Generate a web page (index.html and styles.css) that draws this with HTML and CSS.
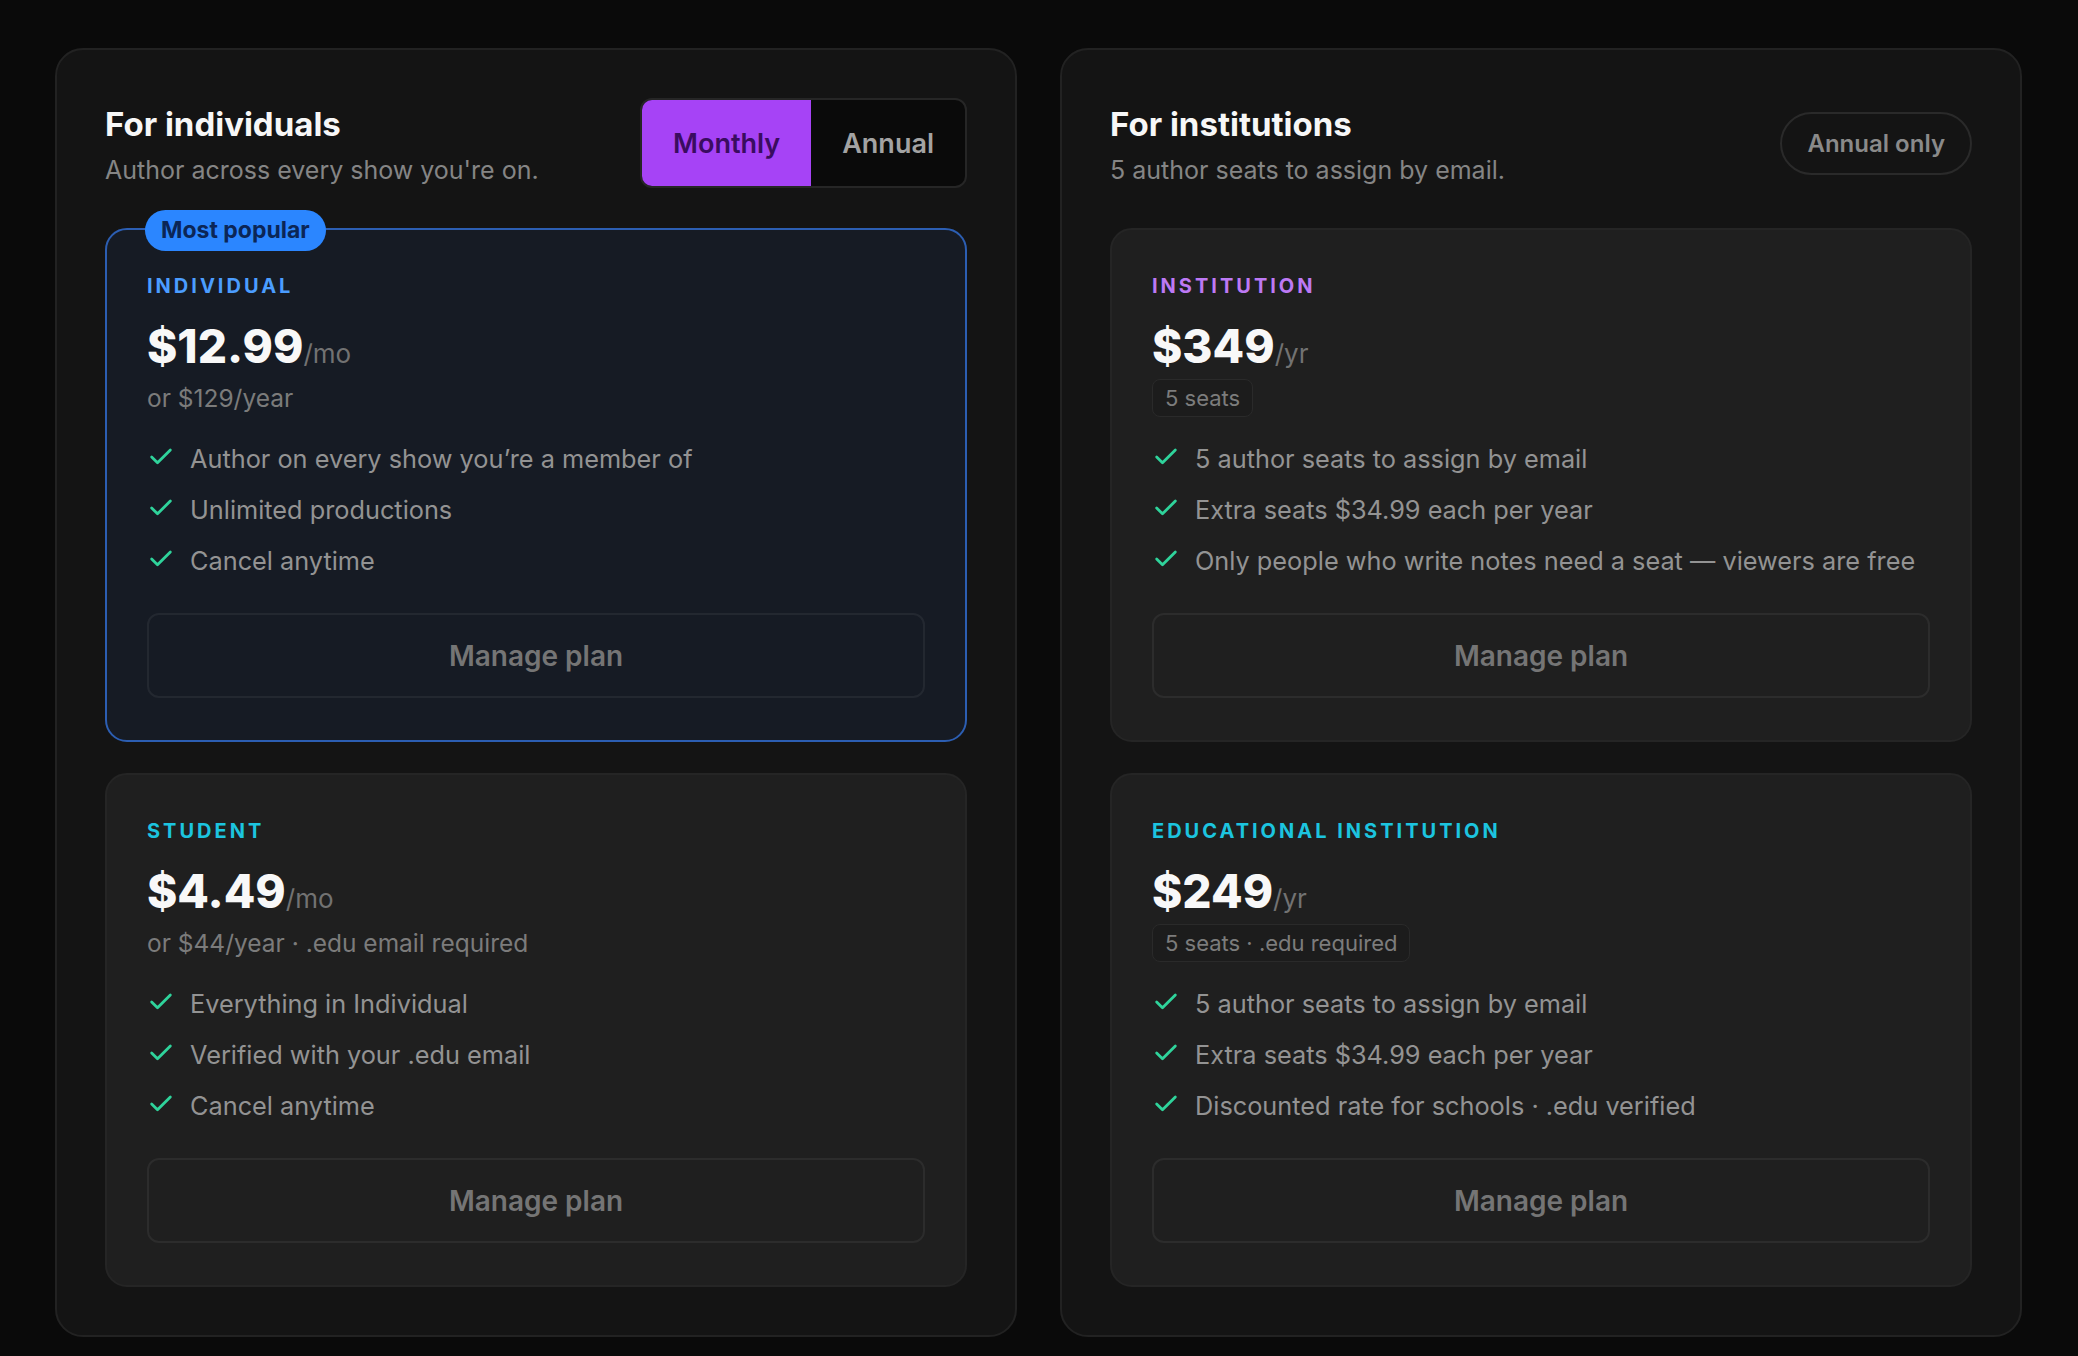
FILE: index.html
```html
<!DOCTYPE html>
<html lang="en">
<head>
    <meta charset="UTF-8">
    <meta name="viewport" content="width=device-width, initial-scale=1.0">
    <title>Plans</title>
    <link rel="stylesheet" href="styles.css">
</head>
<body>
<div class="bang-gia">

    <!-- Cá nhân -->
    <section class="khung-lon">
        <div class="dau-khung">
            <div class="tieu-de">
                <h1>For individuals</h1>
                <p class="mo-ta">Author across every show you're on.</p>
            </div>
            <div class="chon-ky">
                <button class="ky dang-chon">Monthly</button>
                <button class="ky">Annual</button>
            </div>
        </div>

        <div class="the noi-bat">
            <span class="nhan-pho-bien">Most popular</span>
            <div class="ten-goi xanh">INDIVIDUAL</div>
            <div class="gia">$12.99<span class="don-vi">/mo</span></div>
            <div class="ghi-chu">or $129/year</div>
            <ul class="tinh-nang">
                <li><svg viewBox="0 0 24 24"><path d="M20 6 9 17 4 12"/></svg>Author on every show you’re a member of</li>
                <li><svg viewBox="0 0 24 24"><path d="M20 6 9 17 4 12"/></svg>Unlimited productions</li>
                <li><svg viewBox="0 0 24 24"><path d="M20 6 9 17 4 12"/></svg>Cancel anytime</li>
            </ul>
            <button class="nut-quan-ly">Manage plan</button>
        </div>

        <div class="the">
            <div class="ten-goi lam">STUDENT</div>
            <div class="gia">$4.49<span class="don-vi">/mo</span></div>
            <div class="ghi-chu">or $44/year · .edu email required</div>
            <ul class="tinh-nang">
                <li><svg viewBox="0 0 24 24"><path d="M20 6 9 17 4 12"/></svg>Everything in Individual</li>
                <li><svg viewBox="0 0 24 24"><path d="M20 6 9 17 4 12"/></svg>Verified with your .edu email</li>
                <li><svg viewBox="0 0 24 24"><path d="M20 6 9 17 4 12"/></svg>Cancel anytime</li>
            </ul>
            <button class="nut-quan-ly">Manage plan</button>
        </div>
    </section>

    <!-- Tổ chức -->
    <section class="khung-lon">
        <div class="dau-khung">
            <div class="tieu-de">
                <h1>For institutions</h1>
                <p class="mo-ta">5 author seats to assign by email.</p>
            </div>
            <span class="chi-nam">Annual only</span>
        </div>

        <div class="the">
            <div class="ten-goi tim">INSTITUTION</div>
            <div class="gia">$349<span class="don-vi">/yr</span></div>
            <div class="ghi-chu"><span class="the-nho">5 seats</span></div>
            <ul class="tinh-nang">
                <li><svg viewBox="0 0 24 24"><path d="M20 6 9 17 4 12"/></svg>5 author seats to assign by email</li>
                <li><svg viewBox="0 0 24 24"><path d="M20 6 9 17 4 12"/></svg>Extra seats $34.99 each per year</li>
                <li><svg viewBox="0 0 24 24"><path d="M20 6 9 17 4 12"/></svg>Only people who write notes need a seat — viewers are free</li>
            </ul>
            <button class="nut-quan-ly">Manage plan</button>
        </div>

        <div class="the">
            <div class="ten-goi lam">EDUCATIONAL INSTITUTION</div>
            <div class="gia">$249<span class="don-vi">/yr</span></div>
            <div class="ghi-chu"><span class="the-nho">5 seats · .edu required</span></div>
            <ul class="tinh-nang">
                <li><svg viewBox="0 0 24 24"><path d="M20 6 9 17 4 12"/></svg>5 author seats to assign by email</li>
                <li><svg viewBox="0 0 24 24"><path d="M20 6 9 17 4 12"/></svg>Extra seats $34.99 each per year</li>
                <li><svg viewBox="0 0 24 24"><path d="M20 6 9 17 4 12"/></svg>Discounted rate for schools · .edu verified</li>
            </ul>
            <button class="nut-quan-ly">Manage plan</button>
        </div>
    </section>

</div>
</body>
</html>
```

FILE: styles.css
```css
body {
    margin: 0;
    background-color: #0a0a0a;
    font-family: Inter, "Noto Sans", sans-serif;
    color: #f5f5f5;
}

.bang-gia {
    display: grid;
    grid-template-columns: 1fr 1fr;
    gap: 43px;
    padding: 48px 56px 20px 55px;
}

.khung-lon {
    background-color: #141414;
    border: 2px solid #222222;
    border-radius: 28px;
    padding: 48px;
    display: flex;
    flex-direction: column;
    gap: 31px;
}

.dau-khung {
    display: flex;
    justify-content: space-between;
    align-items: flex-start;
    min-height: 90px;
    margin-bottom: 9px;
}

.tieu-de {
    padding-top: 6px;
}

h1 {
    margin: 0;
    font-size: 33px;
    line-height: 40px;
    font-weight: 700;
    color: #f7f7f7;
}

.mo-ta {
    margin: 10px 0 0;
    font-size: 25px;
    line-height: 32px;
    color: #858585;
}

.chon-ky {
    display: flex;
    border: 2px solid #262626;
    border-radius: 12px;
    overflow: hidden;
    background-color: #0a0a0a;
    height: 90px;
    box-sizing: border-box;
}

.ky {
    border: none;
    background: none;
    font-family: inherit;
    font-size: 27px;
    font-weight: 600;
    color: #a3a3a3;
    padding: 0 31px;
    cursor: pointer;
}

.ky.dang-chon {
    background-color: #a643f6;
    color: #3a0c60;
}

.chi-nam {
    align-self: center;
    border: 2px solid #2a2a2a;
    border-radius: 999px;
    padding: 0 25px;
    line-height: 59px;
    font-size: 24px;
    font-weight: 600;
    color: #8a8a8a;
}

.the {
    position: relative;
    background-color: #1f1f1f;
    border: 2px solid #252525;
    border-radius: 22px;
    padding: 42px 40px 42px;
}

.the.noi-bat {
    background-color: #161b24;
    border-color: #2c5eb2;
}

.nhan-pho-bien {
    position: absolute;
    top: -20px;
    left: 38px;
    background-color: #2b86ff;
    color: #0b2657;
    font-size: 23px;
    font-weight: 700;
    line-height: 41px;
    padding: 0 16px;
    border-radius: 999px;
}

.ten-goi {
    font-size: 20px;
    line-height: 28px;
    font-weight: 700;
    letter-spacing: 3px;
}

.xanh { color: #4b9dff; }
.lam { color: #1cc4df; }
.tim { color: #bd79f4; }

.gia {
    margin-top: 20px;
    font-size: 46px;
    line-height: 52px;
    font-weight: 800;
    color: #f8f8f8;
}

.don-vi {
    font-size: 26px;
    line-height: 1;
    font-weight: 400;
    color: #727272;
}

.ghi-chu {
    margin-top: 7px;
    font-size: 24.5px;
    line-height: 38px;
    height: 38px;
    color: #7b7b7b;
}

.the-nho {
    display: inline-block;
    border: 1px solid #2a2a2a;
    background-color: #1c1c1c;
    border-radius: 8px;
    padding: 3px 12px;
    line-height: 30px;
    font-size: 22px;
    color: #7c7c7c;
    vertical-align: top;
}

.tinh-nang {
    list-style: none;
    margin: 23px 0 0;
    padding: 0;
    display: flex;
    flex-direction: column;
    gap: 13px;
}

.tinh-nang li {
    display: flex;
    align-items: center;
    gap: 15px;
    font-size: 25.3px;
    line-height: 38px;
    color: #939393;
}

.tinh-nang svg {
    width: 28px;
    height: 28px;
    flex-shrink: 0;
    fill: none;
    stroke: #2fd39b;
    stroke-width: 2.4;
    stroke-linecap: round;
    stroke-linejoin: round;
    margin-top: -4px;
}

.nut-quan-ly {
    display: block;
    width: 100%;
    margin-top: 33px;
    height: 85px;
    background-color: transparent;
    border: 2px solid rgba(255, 255, 255, 0.06);
    border-radius: 12px;
    font-family: inherit;
    font-size: 28px;
    font-weight: 600;
    color: #757575;
    cursor: pointer;
}
```
